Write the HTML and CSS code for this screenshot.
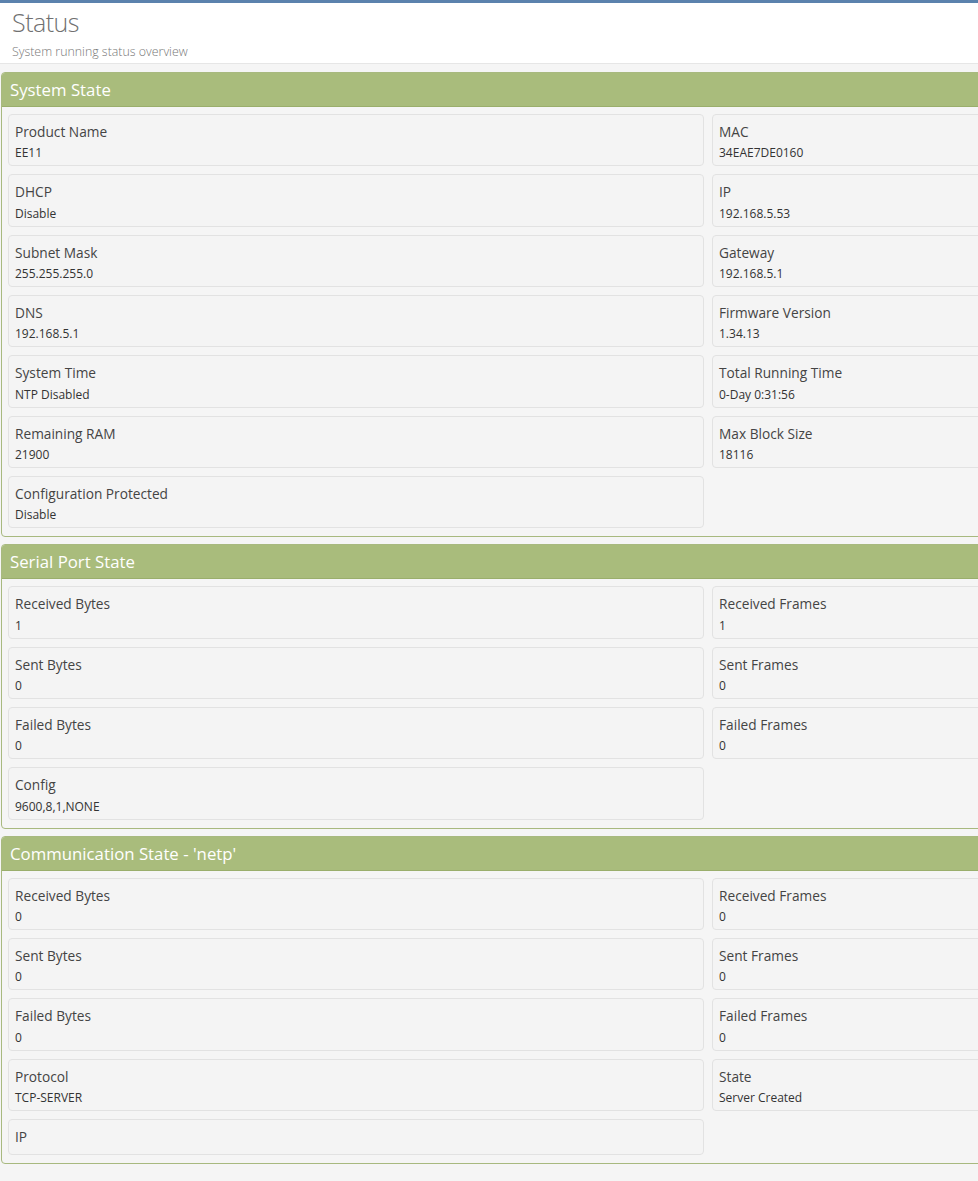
FILE: index.html
```html
<!DOCTYPE html>
<html>
<head>
<meta charset="utf-8">
<link rel="stylesheet" href="styles.css">
</head>
<body>
<div class="topbar"></div>
<header class="page-head">
  <h1 class="page-title">Status</h1>
  <div class="page-sub">System running status overview</div>
</header>
<main class="content">
  <section class="panel">
    <div class="panel-head">System State</div>
    <div class="panel-body">
      <div class="cell"><div class="lbl">Product Name</div><div class="val">EE11</div></div>
      <div class="cell"><div class="lbl">MAC</div><div class="val">34EAE7DE0160</div></div>
      <div class="cell"><div class="lbl">DHCP</div><div class="val">Disable</div></div>
      <div class="cell"><div class="lbl">IP</div><div class="val">192.168.5.53</div></div>
      <div class="cell"><div class="lbl">Subnet Mask</div><div class="val">255.255.255.0</div></div>
      <div class="cell"><div class="lbl">Gateway</div><div class="val">192.168.5.1</div></div>
      <div class="cell"><div class="lbl">DNS</div><div class="val">192.168.5.1</div></div>
      <div class="cell"><div class="lbl">Firmware Version</div><div class="val">1.34.13</div></div>
      <div class="cell"><div class="lbl">System Time</div><div class="val">NTP Disabled</div></div>
      <div class="cell"><div class="lbl">Total Running Time</div><div class="val">0-Day 0:31:56</div></div>
      <div class="cell"><div class="lbl">Remaining RAM</div><div class="val">21900</div></div>
      <div class="cell"><div class="lbl">Max Block Size</div><div class="val">18116</div></div>
      <div class="cell"><div class="lbl">Configuration Protected</div><div class="val">Disable</div></div>
    </div>
  </section>
  <section class="panel">
    <div class="panel-head">Serial Port State</div>
    <div class="panel-body">
      <div class="cell"><div class="lbl">Received Bytes</div><div class="val">1</div></div>
      <div class="cell"><div class="lbl">Received Frames</div><div class="val">1</div></div>
      <div class="cell"><div class="lbl">Sent Bytes</div><div class="val">0</div></div>
      <div class="cell"><div class="lbl">Sent Frames</div><div class="val">0</div></div>
      <div class="cell"><div class="lbl">Failed Bytes</div><div class="val">0</div></div>
      <div class="cell"><div class="lbl">Failed Frames</div><div class="val">0</div></div>
      <div class="cell"><div class="lbl">Config</div><div class="val">9600,8,1,NONE</div></div>
    </div>
  </section>
  <section class="panel">
    <div class="panel-head">Communication State - 'netp'</div>
    <div class="panel-body">
      <div class="cell"><div class="lbl">Received Bytes</div><div class="val">0</div></div>
      <div class="cell"><div class="lbl">Received Frames</div><div class="val">0</div></div>
      <div class="cell"><div class="lbl">Sent Bytes</div><div class="val">0</div></div>
      <div class="cell"><div class="lbl">Sent Frames</div><div class="val">0</div></div>
      <div class="cell"><div class="lbl">Failed Bytes</div><div class="val">0</div></div>
      <div class="cell"><div class="lbl">Failed Frames</div><div class="val">0</div></div>
      <div class="cell"><div class="lbl">Protocol</div><div class="val">TCP-SERVER</div></div>
      <div class="cell"><div class="lbl">State</div><div class="val">Server Created</div></div>
      <div class="cell"><div class="lbl">IP</div><div class="val"></div></div>
    </div>
  </section>
</main>
</body>
</html>
```
FILE: styles.css
```css
html, body {
  margin: 0;
  padding: 0;
  overflow-x: hidden;
}
body {
  background: #f5f5f5;
  font-family: "Open Sans", "Noto Sans", sans-serif;
  color: #444;
  width: 978px;
  min-height: 1181px;
}
.topbar {
  height: 3px;
  background: #5b82ad;
}
.page-head {
  background: #fff;
  height: 61px;
  border-bottom: 1px solid #e6e6e6;
  padding-left: 12px;
  box-sizing: border-box;
}
.page-title {
  margin: 0;
  padding-top: 3px;
  font-size: 25px;
  font-weight: 300;
  line-height: 32px;
  color: #707070;
  letter-spacing: -0.5px;
}
.page-sub {
  margin-top: 6px;
  font-size: 12.4px;
  font-weight: 300;
  line-height: 15px;
  color: #777;
}
.content {
  padding: 8px 0 0 1px;
  display: flex;
  flex-direction: column;
  gap: 7px;
}
.panel {
  width: 1412px;
  border: 1px solid #a8b97f;
  border-radius: 4px;
  background: #f5f5f5;
  overflow: hidden;
}
.panel-head {
  background: #a9bc7c;
  color: #fff;
  font-size: 16.8px;
  line-height: 33px;
  height: 33px;
  padding-left: 8px;
  border-bottom: 1px solid #9aae6c;
}
.panel-body {
  padding: 7px 6px 8px 6px;
  display: grid;
  grid-template-columns: 1fr 1fr;
  column-gap: 8px;
  row-gap: 8px;
  align-items: start;
}
.cell {
  box-sizing: border-box;
  background: #f4f4f4;
  border: 1px solid #e2e2e2;
  border-radius: 4px;
  padding: 7px 6px 7px 6px;
}
.lbl {
  font-size: 13.7px;
  line-height: 20px;
  color: #444;
}
.val {
  font-size: 12px;
  line-height: 11px;
  margin-top: 5.33px;
  color: #333;
}
.val:empty {
  display: none;
}
```
